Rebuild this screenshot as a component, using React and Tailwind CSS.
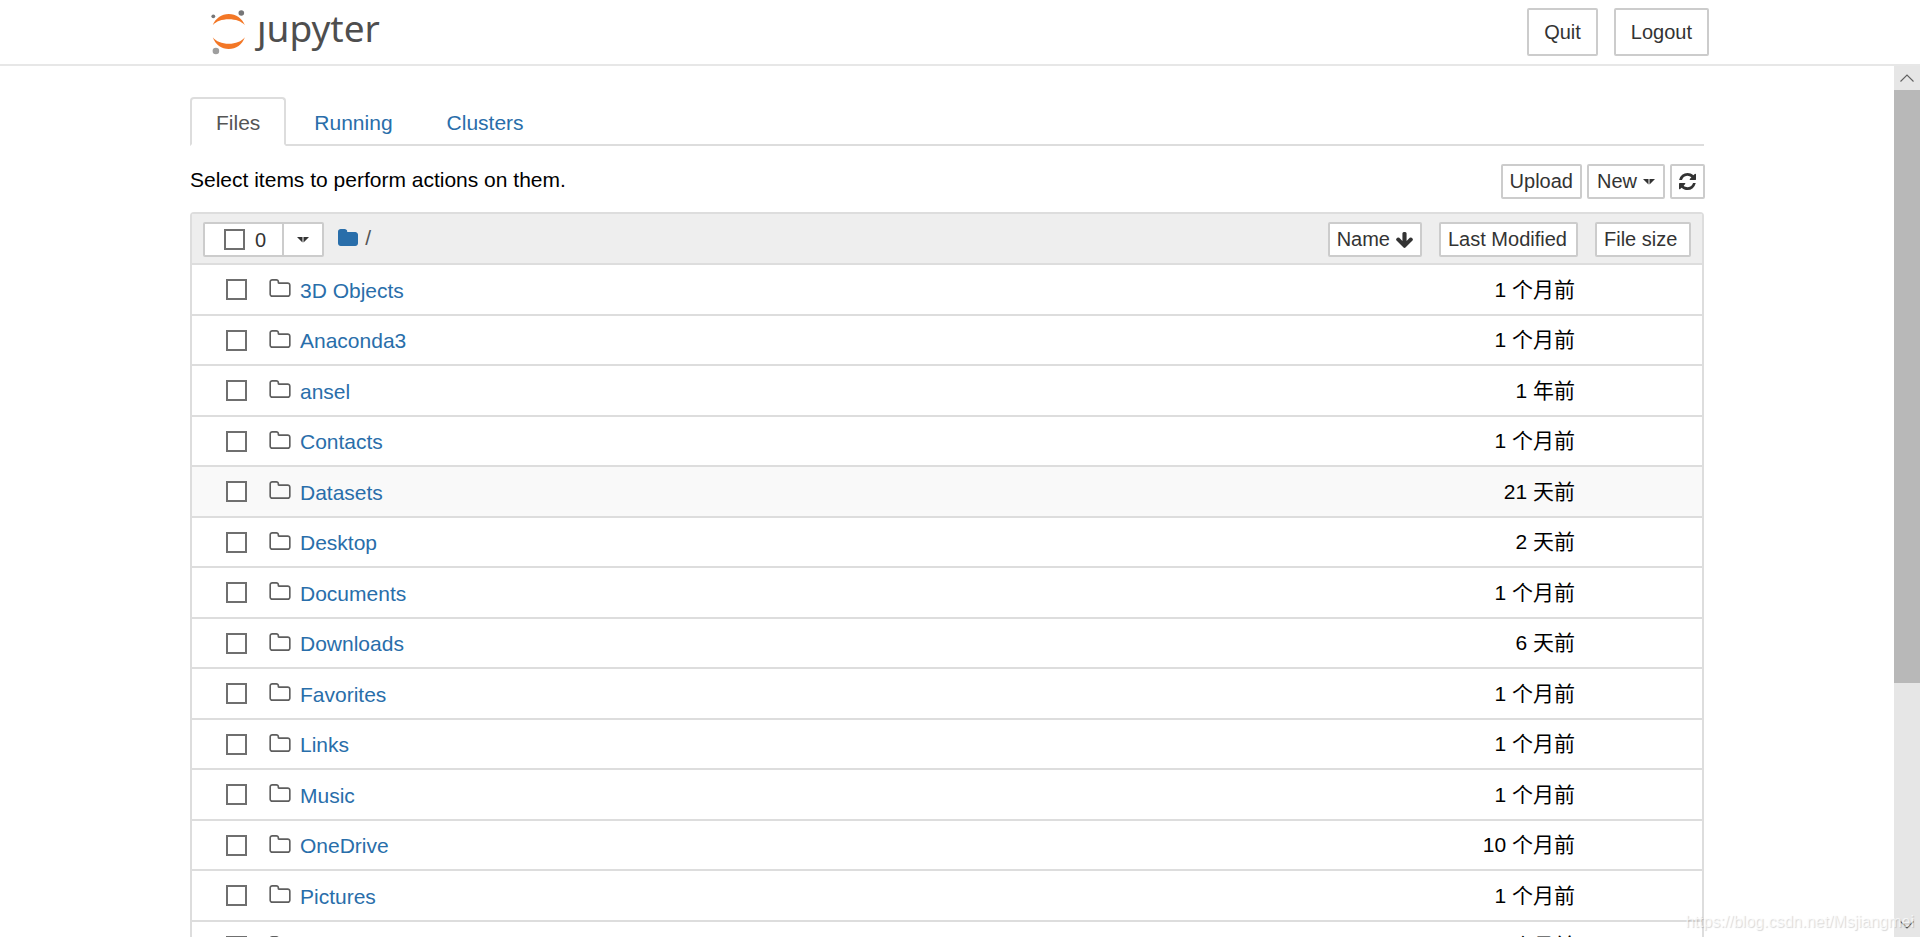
import React, { useState } from 'react';

const buttonStyle = 'rounded-xs border-2 border-[#ccc] bg-white text-xl leading-[31px] text-[#333] hover:bg-[#e6e6e6]';

const files = [
  { name: '3D Objects', modified: '1 个月前' },
  { name: 'Anaconda3', modified: '1 个月前' },
  { name: 'ansel', modified: '1 年前' },
  { name: 'Contacts', modified: '1 个月前' },
  { name: 'Datasets', modified: '21 天前', active: true },
  { name: 'Desktop', modified: '2 天前' },
  { name: 'Documents', modified: '1 个月前' },
  { name: 'Downloads', modified: '6 天前' },
  { name: 'Favorites', modified: '1 个月前' },
  { name: 'Links', modified: '1 个月前' },
  { name: 'Music', modified: '1 个月前' },
  { name: 'OneDrive', modified: '10 个月前' },
  { name: 'Pictures', modified: '1 个月前' },
  { name: 'Saved Games', modified: '1 个月前' },
];

const tabs = ['Files', 'Running', 'Clusters'];

const Logo = () => (
  <a href="#" aria-label="jupyter" className="flex items-center text-[#4e4e4e]">
    <svg className="h-12 w-[46px]" viewBox="0 0 46 48" aria-hidden="true">
      <path fill="#f37726" d="M1.7 17.2C4.4 10.4 10.6 6 17.8 6s13.4 4.4 16.1 11.2C30.5 13.4 24.7 11.3 17.8 11.3S5.1 13.4 1.7 17.2z" />
      <path fill="#f37726" d="M1.7 29.3C5.1 33.5 10.9 35.8 17.8 35.8s12.7-2.3 16.1-6.5C31.2 36.6 25 41.1 17.8 41.1S4.4 36.6 1.7 29.3z" />
      <circle cx="2.3" cy="8.3" r="1.9" fill="#767677" />
      <circle cx="30.3" cy="5" r="2.8" fill="#767677" />
      <circle cx="4.9" cy="43" r="3.3" fill="#9e9e9e" />
    </svg>
    <span className="pb-2 font-['Noto_Sans','Open_Sans',sans-serif] text-[37px]">ȷupyter</span>
  </a>
);

const FolderOutline = () => (
  <svg className="h-[18px] w-[22px]" viewBox="64 128 1664 1408" fill="#5e5e5e" aria-hidden="true">
    <path d="M1600 1312v-704q0-40-28-68t-68-28h-704q-40 0-68-28t-28-68v-64q0-40-28-68t-68-28h-320q-40 0-68 28t-28 68v960q0 40 28 68t68 28h1216q40 0 68-28t28-68zm128-704v704q0 92-66 158t-158 66h-1216q-92 0-158-66t-66-158v-960q0-92 66-158t158-66h320q92 0 158 66t66 158v32h672q92 0 158 66t66 158z" />
  </svg>
);

const FolderSolid = () => (
  <svg className="h-[17px] w-5" viewBox="64 128 1664 1408" fill="#296eaa" aria-hidden="true">
    <path d="M1728 608v704q0 92-66 158t-158 66h-1216q-92 0-158-66t-66-158v-960q0-92 66-158t158-66h320q92 0 158 66t66 158v32h672q92 0 158 66t66 158z" />
  </svg>
);

const RefreshIcon = () => (
  <svg className="h-[17px] w-[17px]" viewBox="128 128 1536 1536" fill="currentColor" aria-hidden="true">
    <path d="M1639 1056q0 5-1 7-64 268-268 434.5t-478 166.5q-146 0-282.5-55t-243.5-157l-129 129q-19 19-45 19t-45-19-19-45v-448q0-26 19-45t45-19h448q26 0 45 19t19 45-19 45l-137 137q71 66 161 102t187 36q134 0 250-65t186-179q11-17 53-117 8-23 30-23h192q13 0 22.5 9.5t9.5 22.5zm25-800v448q0 26-19 45t-45 19h-448q-26 0-45-19t-19-45 19-45l138-138q-148-137-349-137-134 0-250 65t-186 179q-11 17-53 117-8 23-30 23h-199q-13 0-22.5-9.5t-9.5-22.5v-7q65-268 270-434.5t480-166.5q146 0 284 55.5t245 156.5l130-129q19-19 45-19t45 19 19 45z" />
  </svg>
);

const ArrowDown = () => (
  <svg className="h-4 w-[17px]" viewBox="117 128 1558 1483" fill="currentColor" aria-hidden="true">
    <path d="M1675 832q0 53-37 90l-651 652q-39 37-91 37-53 0-90-37l-651-652q-38-36-38-90 0-53 38-91l74-75q39-37 91-37 53 0 90 37l294 294v-704q0-52 38-90t90-38h128q52 0 90 38t38 90v704l294-294q37-37 90-37 52 0 91 37l75 75q37 39 37 91z" />
  </svg>
);

const Caret = () => (
  <svg className="h-1.5 w-3" viewBox="0 0 12 6" fill="currentColor" aria-hidden="true">
    <path d="M0 0h5.5v5.5zM6.5 0H12L6.5 5.5z" />
  </svg>
);

const Checkbox = ({ id, label, checked, onChange }) => (
  <input
    id={id}
    type="checkbox"
    aria-label={label}
    checked={checked}
    onChange={onChange}
    className="block h-[21px] w-[21px] shrink-0 appearance-none border-2 border-[#6f6f6f] bg-white checked:bg-[#6f6f6f]"
  />
);

const Scrollbar = () => (
  <div className="flex w-[26px] shrink-0 flex-col bg-[#e6e6e6]" aria-hidden="true">
    <div className="flex h-6 items-center justify-center">
      <svg className="h-2 w-3.5" viewBox="0 0 14 8" fill="none" stroke="#606060" strokeWidth="1.1">
        <path d="M.5 7.5L7 1l6.5 6.5" />
      </svg>
    </div>
    <div className="grow-[72] basis-0 bg-[#b8b8b8]" />
    <div className="grow-[28] basis-0" />
    <div className="flex h-6 items-center justify-center">
      <svg className="h-2 w-3.5" viewBox="0 0 14 8" fill="none" stroke="#606060" strokeWidth="1.1">
        <path d="M.5.5L7 7l6.5-6.5" />
      </svg>
    </div>
  </div>
);

const App = () => {
  const [selected, setSelected] = useState([]);

  const handleToggle = (name) => {
    if (selected.includes(name)) {
      setSelected(selected.filter((item) => item !== name));
    } else {
      setSelected([...selected, name]);
    }
  };

  const handleToggleAll = () => {
    setSelected(selected.length === files.length ? [] : files.map((file) => file.name));
  };

  return (
    <div className="relative flex h-screen flex-col overflow-hidden bg-white pb-0.5 font-['Liberation_Sans','Noto_Sans_CJK_SC',sans-serif] text-[21px] leading-[30px] text-black">
      <header className="border-b-2 border-[#e7e7e7]">
        <div className="mx-auto flex h-16 w-full max-w-[1514px] items-center justify-between px-2">
          <Logo />
          <div className="flex gap-4">
            <button type="button" className={`${buttonStyle} h-12 px-[15px]`}>Quit</button>
            <button type="button" className={`${buttonStyle} h-12 px-[15px]`}>Logout</button>
          </div>
        </div>
      </header>

      <div className="flex min-h-0 flex-1">
        <main className="min-w-0 flex-1 overflow-hidden">
          <div className="mx-auto max-w-[1514px] pt-[31px]">
            <nav className="flex gap-0.5 border-b-2 border-[#ddd]">
              {tabs.map((tab, index) => (
                <a
                  key={tab}
                  href={`#${tab.toLowerCase()}`}
                  className={index === 0
                    ? '-mb-0.5 rounded-t-sm border-2 border-[#ddd] border-b-white bg-white px-6 pt-[9px] pb-1.5 text-[#555]'
                    : 'border-2 border-b-0 border-transparent px-6 pt-[9px] pb-1.5 text-[#296eaa]'}
                >
                  {tab}
                </a>
              ))}
            </nav>

            <div className="flex items-start justify-between pt-[18px]">
              <p className="pt-px">Select items to perform actions on them.</p>
              <div className="-mr-px flex gap-[5px]">
                <button type="button" className={`${buttonStyle} px-[7px]`}>Upload</button>
                <button type="button" className={`${buttonStyle} flex items-center gap-1.5 px-2`}>
                  New <Caret />
                </button>
                <button type="button" aria-label="Refresh notebook list" className={`${buttonStyle} flex items-center px-[7px]`}>
                  <RefreshIcon />
                </button>
              </div>
            </div>

            <div className="mt-[13px] rounded-t-sm border-2 border-[#ddd]">
              <table className="w-full border-separate border-spacing-0">
                <thead>
                  <tr className="bg-[#eee]">
                    <th className="h-[51px] border-b-2 border-[#ddd] px-0 pt-0.5 pb-0 font-normal">
                      <div className="flex items-center justify-between pr-[17px] pl-[11px]">
                        <div className="flex items-center">
                          <div className="flex h-[35px] items-center rounded-xs border-2 border-[#ccc] bg-white text-xl text-[#333]">
                            <label htmlFor="select-all" className="flex items-center gap-2.5 pr-4 pl-[19px]">
                              <Checkbox id="select-all" checked={selected.length === files.length} onChange={handleToggleAll} />
                              <span>{selected.length}</span>
                            </label>
                            <button type="button" aria-label="Select by type" className="flex h-full items-center border-l-2 border-[#ccc] px-[13px]">
                              <Caret />
                            </button>
                          </div>
                          <div className="flex items-center gap-[7px] pb-1 pl-3.5 text-[#555]">
                            <a href="#root" aria-label="Home folder"><FolderSolid /></a>
                            <span>/</span>
                          </div>
                        </div>
                        <button type="button" className={`${buttonStyle} flex items-center gap-1.5 px-[7px]`}>
                          Name <ArrowDown />
                        </button>
                      </div>
                    </th>
                    <th className="w-[139px] border-b-2 border-[#ddd] px-0 pt-0.5 pb-0 font-normal">
                      <button type="button" className={`${buttonStyle} block w-full pl-[7px] text-left`}>Last Modified</button>
                    </th>
                    <th className="w-[124px] border-b-2 border-[#ddd] pt-0.5 pr-[11px] pb-0 pl-[17px] font-normal">
                      <button type="button" className={`${buttonStyle} block w-full pl-[7px] text-left`}>File size</button>
                    </th>
                  </tr>
                </thead>
                <tbody>
                  {files.map((file) => (
                    <tr key={file.name} className={`group ${file.active ? 'bg-[#f9f9f9]' : 'bg-white'}`}>
                      <td className="h-[50px] border-b-2 border-[#ddd] p-0 group-odd:h-[51px]">
                        <div className="flex items-center pl-[34px]">
                          <Checkbox
                            label={`Select ${file.name}`}
                            checked={selected.includes(file.name)}
                            onChange={() => handleToggle(file.name)}
                          />
                          <a href={`#${file.name}`} className="flex items-center gap-[9px] pt-0.5 pl-[22px] text-[#296eaa]">
                            <span className="pb-[5px]"><FolderOutline /></span>
                            {file.name}
                          </a>
                        </div>
                      </td>
                      <td className="border-b-2 border-[#ddd] py-0 pr-[3px] pl-0 text-right">{file.modified}</td>
                      <td className="border-b-2 border-[#ddd] p-0" />
                    </tr>
                  ))}
                </tbody>
              </table>
            </div>
          </div>
        </main>
        <Scrollbar />
      </div>

      <p className="pointer-events-none absolute right-1.5 bottom-[5px] text-base text-white/70 [text-shadow:1px_1px_1px_rgba(0,0,0,0.16)]">
        https://blog.csdn.net/Msjiangmei
      </p>
    </div>
  );
};

export default App;
